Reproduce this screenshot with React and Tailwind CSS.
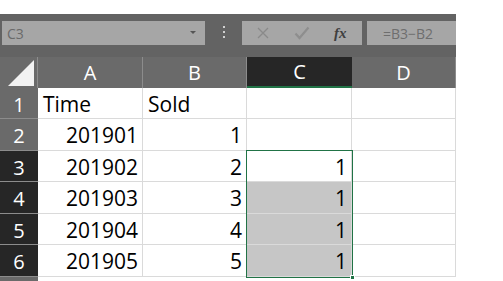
const cols = [
  { key: "A", w: "w-[105px]" },
  { key: "B", w: "w-[104px]" },
  { key: "C", w: "w-[105px]" },
  { key: "D", w: "w-[104px]" },
];

const rows = [
  { n: 1, h: "h-[31px]", cells: ["Time", "Sold", "", ""], left: true },
  { n: 2, h: "h-[32px]", cells: ["201901", "1", "", ""] },
  { n: 3, h: "h-[31px]", cells: ["201902", "2", "1", ""], sel: true },
  { n: 4, h: "h-[32px]", cells: ["201903", "3", "1", ""], sel: true },
  { n: 5, h: "h-[31px]", cells: ["201904", "4", "1", ""], sel: true },
  { n: 6, h: "h-[32px]", cells: ["201905", "5", "1", ""], sel: true },
];

function FormulaBar() {
  return (
    <div className="flex h-[43px] w-[456px] items-start bg-[#636363] pl-[2px] pt-[7px]">
      <div className="relative flex h-[24px] w-[203px] items-center bg-[#a6a6a6] pl-[5px] text-[14px] text-[#6a6a6a]">
        C3
        <span className="absolute right-[9px] top-[10px] h-0 w-0 border-x-[3px] border-t-[3px] border-x-transparent border-t-[#555]" />
      </div>
      <div className="flex w-[37px] flex-col items-center gap-[3px] pt-[5px]">
        <span className="h-[2px] w-[2px] bg-[#d0d0d0]" />
        <span className="h-[2px] w-[2px] bg-[#d0d0d0]" />
        <span className="h-[2px] w-[2px] bg-[#d0d0d0]" />
      </div>
      <div className="flex h-[24px] w-[120px] items-center bg-[#a6a6a6]">
        <svg width="14" height="14" viewBox="0 0 14 14" className="ml-[14px]">
          <path d="M2 2 L12 12 M12 2 L2 12" stroke="#8a8a8a" strokeWidth="1.3" />
        </svg>
        <svg width="16" height="14" viewBox="0 0 16 14" className="ml-[24px]">
          <path d="M1.5 7.5 L5.5 12 L14.5 1.5" stroke="#8e8e8e" strokeWidth="2.2" fill="none" />
        </svg>
        <span className="ml-[24px] font-['Liberation_Serif',serif] text-[15px] italic font-bold text-[#3f3f3f]">
          fx
        </span>
      </div>
      <div className="ml-[5px] flex h-[24px] flex-1 items-center bg-[#a6a6a6] pl-[16px] text-[14px] text-[#6e6e6e]">
        =B3−B2
      </div>
    </div>
  );
}

export default function App() {
  return (
    <div className="h-[281px] w-[503px] overflow-hidden bg-white font-['Open_Sans',sans-serif]">
      <div className="h-[14px]" />
      <FormulaBar />
      <div className="relative w-[456px]">
        {/* column headers */}
        <div className="flex h-[31px] bg-[#6a6a6a] text-[20px] text-white">
          <div className="relative w-[38px] border-r border-[#8c8c8c]">
            <svg width="28" height="28" viewBox="0 0 28 28" className="absolute bottom-[1px] right-[2px]">
              <path d="M27 1 L27 27 L1 27 Z" fill="#f2f2f2" />
            </svg>
          </div>
          {cols.map((c) =>
            c.key === "C" ? (
              <div
                key={c.key}
                className={`${c.w} flex items-center justify-center border-b-2 border-[#217346] bg-[#262626]`}
              >
                {c.key}
              </div>
            ) : (
              <div
                key={c.key}
                className={`${c.w} flex items-center justify-center border-r border-[#8c8c8c]`}
              >
                {c.key}
              </div>
            )
          )}
        </div>
        {/* rows */}
        {rows.map((r) => (
          <div key={r.n} className={`flex ${r.h} text-[21px] text-black`}>
            <div
              className={`flex w-[38px] items-center justify-center border-b border-[#8c8c8c] pt-[3px] text-[20px] text-white ${
                r.sel ? "bg-[#262626]" : "bg-[#6a6a6a]"
              }`}
            >
              {r.n}
            </div>
            {cols.map((c, i) => {
              const v = r.cells[i];
              const fill = r.sel && c.key === "C" && r.n > 3 ? "bg-[#c6c6c6]" : "bg-white";
              return (
                <div
                  key={c.key}
                  className={`${c.w} flex items-center border-b border-r border-[#dadada] pt-[3px] ${fill} ${
                    r.left ? "justify-start pl-[5px]" : "justify-end pr-[4px]"
                  }`}
                >
                  {v}
                </div>
              );
            })}
          </div>
        ))}
        <div className="h-[10px] w-[38px] bg-[#6a6a6a]" />
        {/* selection C3:C6 */}
        <div className="pointer-events-none absolute left-[246px] top-[93px] h-[128px] w-[107px] border-[1.5px] border-[#217346]" />
        <div className="absolute left-[350px] top-[218px] h-[5px] w-[5px] border border-white bg-[#217346]" />
      </div>
    </div>
  );
}
